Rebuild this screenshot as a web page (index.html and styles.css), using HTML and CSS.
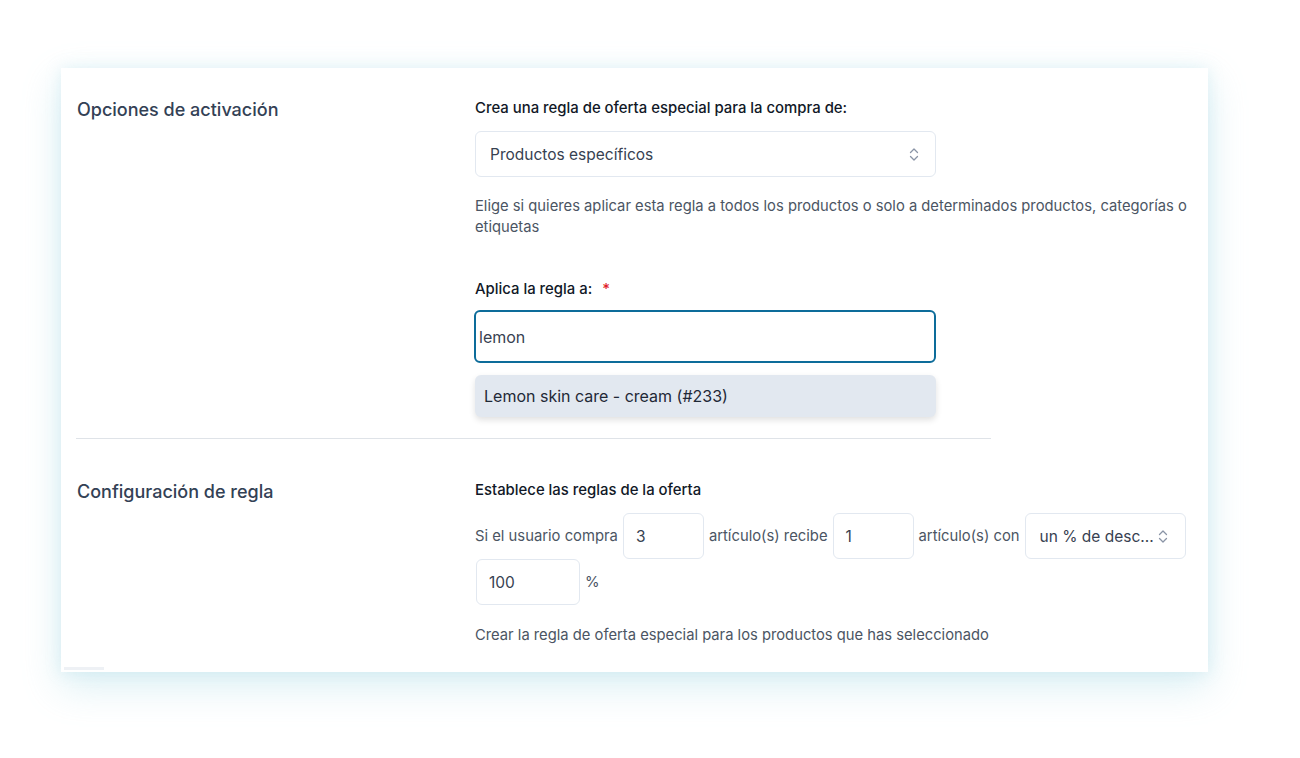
FILE: index.html
```html
<!DOCTYPE html>
<html>

<head>
  <title>Regla de oferta especial</title>
  <link rel="stylesheet" href="styles.css">
</head>

<body>
  <div class="Offer-Card">
    <section class="Offer-Section Offer-Section--first">
      <h2 class="Offer-Title">Opciones de activación</h2>
      <div class="Offer-Fields">
        <label class="Offer-Label">Crea una regla de oferta especial para la compra de:</label>
        <div class="Select Select--wide">
          <span>Productos específicos</span>
          <svg class="Select-Arrows" width="10" height="15" viewBox="0 0 10 15">
            <path d="M1.5 5.5 L5 2 L8.5 5.5 M1.5 9.5 L5 13 L8.5 9.5" fill="none" stroke="#8a94a6" stroke-width="1.3" stroke-linecap="round" stroke-linejoin="round" />
          </svg>
        </div>
        <p class="Offer-Help">Elige si quieres aplicar esta regla a todos los productos o solo a determinados productos, categorías o etiquetas</p>

        <label class="Offer-Label Offer-Label--spaced">Aplica la regla a: <span class="Required">*</span></label>
        <div class="Search-Input">lemon</div>
        <div class="Search-Result">Lemon skin care - cream (#233)</div>
      </div>
    </section>

    <hr class="Offer-Divider">

    <section class="Offer-Section Offer-Section--second">
      <h2 class="Offer-Title">Configuración de regla</h2>
      <div class="Offer-Fields">
        <label class="Offer-Label">Establece las reglas de la oferta</label>
        <div class="Rule-Row">
          <span class="Rule-Text">Si el usuario compra</span>
          <div class="Num-Input Num-Input--small">3</div>
          <span class="Rule-Text">artículo(s) recibe</span>
          <div class="Num-Input Num-Input--small">1</div>
          <span class="Rule-Text">artículo(s) con</span>
          <div class="Select Select--small">
            <span>un % de desc...</span>
            <svg class="Select-Arrows" width="10" height="15" viewBox="0 0 10 15">
              <path d="M1.5 5.5 L5 2 L8.5 5.5 M1.5 9.5 L5 13 L8.5 9.5" fill="none" stroke="#8a94a6" stroke-width="1.3" stroke-linecap="round" stroke-linejoin="round" />
            </svg>
          </div>
          <div class="Num-Input Num-Input--pct">100</div>
          <span class="Rule-Text">%</span>
        </div>
        <p class="Offer-Help Offer-Help--last">Crear la regla de oferta especial para los productos que has seleccionado</p>
      </div>
    </section>
    <div class="Card-Tab"></div>
  </div>
</body>

</html>
```

FILE: styles.css
```css
body, html {
  margin: 0;
  padding: 0;
}

body {
  background: #fff;
  font-family: Inter, "Noto Sans", sans-serif;
  color: #334155;
  padding: 68px 0 86px 61px;
}

.Offer-Card {
  position: relative;
  width: 1147px;
  height: 604px;
  box-sizing: border-box;
  background: #fff;
  padding: 0 16px;
  box-shadow: 0 14px 36px rgba(140, 205, 222, 0.32), 0 0 14px rgba(160, 215, 228, 0.25);
}

.Offer-Section {
  display: grid;
  grid-template-columns: 398px 1fr;
}

.Offer-Section--first {padding-top: 30px;}
.Offer-Section--second {padding-top: 41px;}

.Offer-Title {
  margin: 0;
  font-size: 18px;
  font-weight: 500;
  line-height: 24px;
  color: #334155;
}

.Offer-Label {
  display: block;
  font-size: 14.9px;
  font-weight: 500;
  line-height: 20px;
  color: #111827;
}

.Offer-Label--spaced {margin-top: 41px;}

.Required {
  color: #e11d2a;
  margin-left: 6px;
}

.Select {
  display: flex;
  align-items: center;
  justify-content: space-between;
  box-sizing: border-box;
  border: 1px solid #e2e8f0;
  border-radius: 6px;
  background: #fff;
  font-size: 15.5px;
  color: #374151;
  white-space: nowrap;
  flex-shrink: 0;
}

.Select--wide {
  width: 461px;
  height: 46px;
  margin-top: 13px;
  padding: 0 16px 0 14px;
}

.Select--small {
  width: 161px;
  height: 46px;
  padding: 0 20px 0 14px;
  gap: 4px;
}

.Select-Arrows {flex-shrink: 0;}

.Offer-Help {
  margin: 19px 0 0;
  font-size: 14.75px;
  line-height: 21px;
  color: #4b5563;
}

.Offer-Help--last {margin-top: 20px;}

.Search-Input {
  width: 462px;
  height: 53px;
  box-sizing: border-box;
  margin: 11px 0 0 -1px;
  border: 2px solid #0d6c9a;
  border-radius: 6px;
  padding: 0 3px;
  display: flex;
  align-items: center;
  font-size: 16px;
  color: #374151;
}

.Search-Result {
  width: 461px;
  height: 42px;
  box-sizing: border-box;
  margin-top: 12px;
  padding: 0 9px;
  display: flex;
  align-items: center;
  border-radius: 6px;
  background: #e2e8f0;
  box-shadow: 0 3px 6px rgba(0, 0, 0, 0.12);
  font-size: 16px;
  color: #1f2937;
}

.Offer-Divider {
  width: 915px;
  margin: 21px 0 0 -1px;
  border: 0;
  border-top: 1.5px solid #dfe3e8;
}

.Rule-Row {
  display: flex;
  flex-wrap: wrap;
  align-items: center;
  margin-top: 13px;
  column-gap: 5px;
}

.Rule-Text {
  font-size: 14.8px;
  color: #4b5563;
  white-space: nowrap;
}

.Num-Input {
  height: 46px;
  box-sizing: border-box;
  border: 1px solid #e2e8f0;
  border-radius: 6px;
  padding: 0 12px;
  display: flex;
  align-items: center;
  font-size: 15.5px;
  color: #374151;
}

.Num-Input--small {width: 81px;}

.Num-Input--pct {
  width: 104px;
  margin-left: 1px;
}

.Card-Tab {
  position: absolute;
  left: 3px;
  bottom: 2px;
  width: 40px;
  height: 3px;
  background: #eef1f5;
}
```
